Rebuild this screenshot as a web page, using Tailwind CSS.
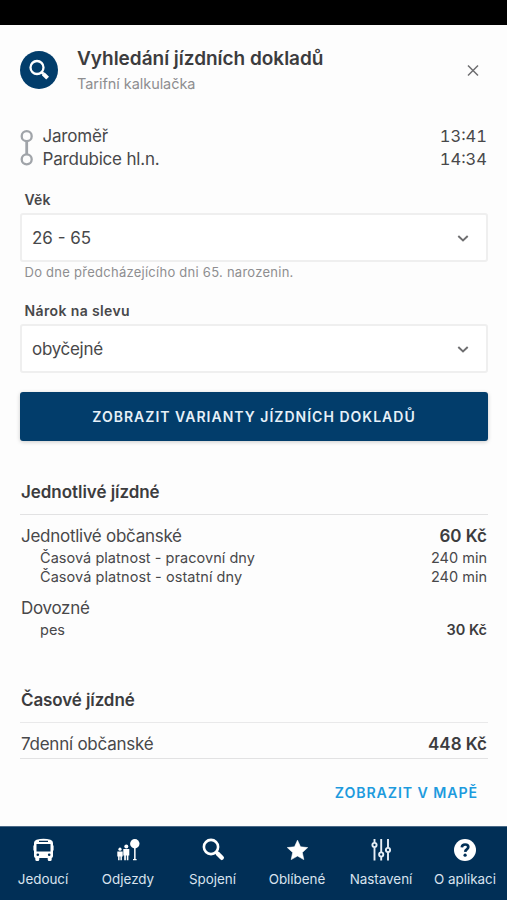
<!DOCTYPE html>
<html lang="cs">
<head>
<meta charset="utf-8">
<title>Vyhledání jízdních dokladů</title>
<script src="https://cdn.jsdelivr.net/npm/@tailwindcss/browser@4"></script>
</head>
<body class="bg-[#fdfdfd]">
<div class="flex h-[900px] w-[507px] flex-col overflow-hidden bg-[#fdfdfd] font-['Inter','Liberation_Sans',sans-serif] text-[#48484a] whitespace-nowrap">
  <div class="h-[25px] shrink-0 bg-black"></div>

  <main class="flex h-[801px] shrink-0 flex-col pr-[19px] pl-5">
    <header class="flex h-[90px] items-center">
      <div class="flex size-[38px] items-center justify-center rounded-full bg-[#023d6b]">
        <svg class="size-[24px]" viewBox="0 0 24 24" fill="none" stroke="#fff"><circle cx="10" cy="9.500" r="6.500" stroke-width="2.300"/><path d="M14.500 14l2 2" stroke-width="2.800"/><path d="M16.300 15.800l4.300 4.300" stroke-width="4"/></svg>
      </div>
      <div class="ml-[19px] flex grow flex-col pt-[4px]">
        <h1 class="h-[24px] text-[19px] leading-[24px] font-semibold tracking-[-0.02px] text-[#3c3c3e]">Vyhledání jízdních dokladů</h1>
        <p class="h-[26px] text-[14.5px] leading-[25px] tracking-[-0.05px] text-[#8e8e90]">Tarifní kalkulačka</p>
      </div>
      <svg class="mr-2 size-[14px]" viewBox="0 0 14 14" stroke="#6e6e70" stroke-width="1.500"><path d="M2 2.500l10 10M12 2.500L2 12.500"/></svg>
    </header>

    <section class="flex h-[76px] pt-[9px]">
      <svg class="mt-[4px] h-[40px] w-[14px]" viewBox="0 0 14 40" fill="none" stroke="#a0a4a9" stroke-width="2.300"><circle cx="6.700" cy="8.200" r="5"/><circle cx="6.700" cy="31.300" r="5"/><path d="M6.700 13v13.300" stroke-width="2.800"/></svg>
      <div class="ml-[8.500px] grow pt-px text-[17px] leading-[23px] tracking-[-0.2px]">
        <div>Jaroměř</div>
        <div>Pardubice hl.n.</div>
      </div>
      <div class="pt-px pr-px text-right text-[16.500px] leading-[23px] tabular-nums">
        <div>13:41</div>
        <div>14:34</div>
      </div>
    </section>

    <section>
      <div class="h-[22px] pl-[4.500px] text-[14px] leading-[18px] font-semibold tracking-[0.15px]">Věk</div>
      <div class="flex h-[49px] items-center rounded-[3px] border-2 border-[#efefef] bg-white pr-[17px] pl-[10px]">
        <span class="grow pt-[2px] text-[17px]">26 - 65</span>
        <svg class="size-[12px]" viewBox="0 0 12 12" fill="none" stroke="#6e6e70" stroke-width="1.900"><path d="M1.300 4l4.700 4.500L10.700 4"/></svg>
      </div>
      <div class="h-[39px] pl-[4.500px] text-[13px] leading-[21px] tracking-[0.26px] text-[#8e8e90]">Do dne předcházejícího dni 65. narozenin.</div>
      <div class="h-[23px] pl-[4.500px] text-[14px] leading-[20px] font-semibold tracking-[0.38px]">Nárok na slevu</div>
      <div class="flex h-[49px] items-center rounded-[3px] border-2 border-[#efefef] bg-white pr-[17px] pl-[10px]">
        <span class="grow pt-[2px] text-[17px] tracking-[-0.3px]">obyčejné</span>
        <svg class="size-[12px]" viewBox="0 0 12 12" fill="none" stroke="#6e6e70" stroke-width="1.900"><path d="M1.300 4l4.700 4.500L10.700 4"/></svg>
      </div>
    </section>

    <button class="mt-[19px] h-[49px] shrink-0 rounded-[3px] bg-[#023d6b] pb-px text-[14px] font-semibold tracking-[1.010px] text-[#e6f0f8] shadow-[0_1px_4px_rgba(0,0,0,0.2)]">ZOBRAZIT VARIANTY JÍZDNÍCH DOKLADŮ</button>

    <section class="mt-[38px] px-px">
      <h2 class="-mx-px h-[36px] border-b border-[#e2e2e3] pt-px pl-px text-[17px] leading-[25px] font-semibold tracking-[-0.05px] text-[#3c3c3e]">Jednotlivé jízdné</h2>
      <div class="mt-[10px] flex h-[23px] justify-between text-[17px] leading-[22px]"><span class="tracking-[-0.27px]">Jednotlivé občanské</span><span class="font-semibold text-[#3c3c3e]">60 Kč</span></div>
      <div class="flex h-[19px] justify-between pl-[19px] text-[14.500px] leading-[20px]"><span class="tracking-[0.04px]">Časová platnost - pracovní dny</span><span>240 min</span></div>
      <div class="flex h-[20px] justify-between pl-[19px] text-[14.500px] leading-[20px]"><span class="tracking-[0.06px]">Časová platnost - ostatní dny</span><span>240 min</span></div>
      <div class="mt-[10px] h-[23px] text-[17px] leading-[22px] tracking-[-0.3px]">Dovozné</div>
      <div class="flex h-[20px] justify-between pl-[19px] text-[14.500px] leading-[20px]"><span>pes</span><span class="font-semibold text-[#3c3c3e]">30 Kč</span></div>
    </section>

    <section class="mt-[48px] px-px">
      <h2 class="-mx-px h-[35px] border-b border-[#e9e9ea] pl-px text-[17px] leading-[25px] font-semibold tracking-[-0.1px] text-[#3c3c3e]">Časové jízdné</h2>
      <div class="-mx-px flex h-[36px] justify-between border-b border-[#e2e2e3] px-px text-[17px] leading-[42px]"><span class="tracking-[-0.24px]">7denní občanské</span><span class="font-semibold text-[#3c3c3e]">448 Kč</span></div>
    </section>
    <a class="mt-[24px] self-end pr-[10px] text-[14.200px] leading-[20px] font-semibold tracking-[0.9px] text-[#1d9bde]">ZOBRAZIT V MAPĚ</a>
  </main>

  <nav class="grid h-[74px] shrink-0 grid-cols-[86px_84px_85px_84px_84px_84px] border-t border-[#4b6a87] bg-[#012f56] text-[13.400px] text-[#d9e3ee]">
    <div class="flex flex-col items-center pt-[11px]">
      <svg class="size-6" viewBox="0 0 24 24" fill="#fff"><path d="M5.500 1.700Q12.500-.1 19.500 1.700 22 2.400 22 5v2.500h.6v5H22V18q0 1.500-1.300 2V21.500q0 1.500-1.500 1.500h-1q-1.500 0-1.500-1.500V20H8.300v1.500Q8.300 23 6.800 23h-1q-1.500 0-1.500-1.500V20Q3 19.500 3 18v-5.500h-.6v-5H3V5Q3 2.400 5.500 1.700Z"/><path fill="#012f56" d="M8 2.700h9v1.200H8zM5.500 6h14v7.500h-14z"/><circle cx="6.800" cy="16.800" r="1.300" fill="#012f56"/><circle cx="18.200" cy="16.800" r="1.300" fill="#012f56"/></svg>
      <span class="mt-[8px] leading-[18px]">Jedoucí</span>
    </div>
    <div class="flex flex-col items-center pt-[11px]">
      <svg class="size-6" viewBox="0 0 24 24" fill="#fff"><circle cx="18.800" cy="5.800" r="4.700"/><path d="M18.100 10h1.500v11h1v1.300h-3.600V21h1.100z"/><circle cx="4" cy="11.200" r="1.600"/><path d="M1.300 13.500h5.400v5h-.8v3.800H4.400V18.500h-.8v3.800H2.100v-3.800h-.8z"/><circle cx="10.300" cy="8.500" r="2"/><path d="M7.300 11h6v6.500h-.9v4.800h-1.600V17.500h-.9v4.800H8.200V17.500h-.9z"/></svg>
      <span class="mt-[8px] leading-[18px]">Odjezdy</span>
    </div>
    <div class="flex flex-col items-center pt-[11px]">
      <svg class="size-6" viewBox="0 0 24 24" fill="none" stroke="#fff"><circle cx="10" cy="9" r="7.100" stroke-width="2.600"/><path d="M14.800 13.800l3 3" stroke-width="3.400"/><path d="M16.800 15.800l4 4" stroke-width="4.400" stroke-linecap="round"/></svg>
      <span class="mt-[8px] leading-[18px]">Spojení</span>
    </div>
    <div class="flex flex-col items-center pt-[11px]">
      <svg class="size-6" viewBox="0 0 24 24" fill="#fff" stroke="#fff" stroke-linejoin="round"><path d="M12.500 2.200l3 6.600 7.200.8-5.400 4.900 1.500 7.100-6.300-3.600-6.300 3.600 1.500-7.100-5.400-4.900 7.200-.8z" stroke-width=".6"/></svg>
      <span class="mt-[8px] leading-[18px]">Oblíbené</span>
    </div>
    <div class="flex flex-col items-center pt-[11px]">
      <svg class="size-6" viewBox="0 0 24 24" fill="none" stroke="#e6eef6" stroke-width="1.900"><path d="M5.500 1v3.700M5.500 9.300V22.500M12.200 1v13.200M12.200 18.800v3.700M19 1v8.700M19 14.300v8.200"/><circle cx="5.500" cy="7" r="2.100"/><circle cx="12.200" cy="16.500" r="2.100"/><circle cx="19" cy="12" r="2.100"/></svg>
      <span class="mt-[8px] leading-[18px]">Nastavení</span>
    </div>
    <div class="flex flex-col items-center pt-[11px]">
      <svg class="size-6" viewBox="0 0 24 24" fill="none"><circle cx="12" cy="12" r="11" fill="#fff"/><path d="M8.800 9.300q.3-2.800 3.300-2.800 3.200 0 3.200 2.600 0 1.300-1.500 2.300-1.500 1-1.600 2.400" stroke="#012f56" stroke-width="2.700"/><circle cx="12.100" cy="17.200" r="1.600" fill="#012f56"/></svg>
      <span class="mt-[8px] leading-[18px]">O aplikaci</span>
    </div>
  </nav>
</div>
</body>
</html>
